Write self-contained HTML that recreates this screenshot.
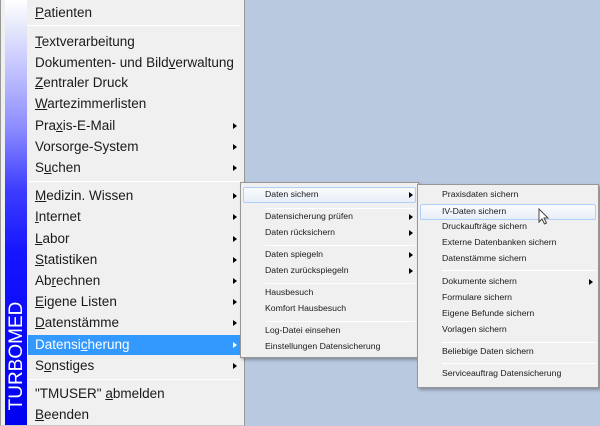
<!DOCTYPE html><html><head><meta charset="utf-8"><style>
*{margin:0;padding:0;box-sizing:border-box}
body{width:600px;height:425px;background:#b9c9e0;position:relative;overflow:hidden;font-family:"Liberation Sans",sans-serif;color:#1a1a1a}
.m{position:absolute;background:#f0f0f0;border:1px solid #979797}
.bar{position:absolute;left:4px;top:0;width:22px;height:425px;background:linear-gradient(#fff 0%,#dfe3fb 8%,#c8c8ff 15%,#8c8cff 30%,#3c3cff 45%,#1414ff 60%,#0000f0 100%)}
.t{position:absolute;white-space:nowrap}
.a{position:absolute;width:0;height:0;border-left:4px solid #000;border-top:3px solid transparent;border-bottom:3px solid transparent}
.s{position:absolute;height:1px;background:#d5d5d5;border-bottom:1px solid #fff}
.m1 .t{font-size:13.5px;left:34px}
.m2 .t,.m3 .t{font-size:8.7px}
u{text-decoration:underline}
</style></head><body>
<div class="m m1" style="left:0;top:-1px;width:245px;height:427px;border-color:#c8c8c8 #979797">
<div class="bar"></div>
<div style="position:absolute;left:27px;top:335px;width:213px;height:20px;background:#3399ff"></div>
<div class="t" style="top:5px"><u>P</u>atienten</div>
<div class="s" style="left:27px;top:25px;width:212px"></div>
<div class="t" style="top:34px"><u>T</u>extverarbeitung</div>
<div class="t" style="top:55px">Dokumenten- und Bild<u>v</u>erwaltung</div>
<div class="t" style="top:75px"><u>Z</u>entraler Druck</div>
<div class="t" style="top:96px"><u>W</u>artezimmerlisten</div>
<div class="t" style="top:118px">Pra<u>x</u>is-E-Mail</div><div class="a" style="left:232px;top:123px"></div>
<div class="t" style="top:139px">Vorsorge-System</div><div class="a" style="left:232px;top:144px"></div>
<div class="t" style="top:160px">S<u>u</u>chen</div><div class="a" style="left:232px;top:165px"></div>
<div class="s" style="left:27px;top:181px;width:212px"></div>
<div class="t" style="top:188px"><u>M</u>edizin. Wissen</div><div class="a" style="left:232px;top:193px"></div>
<div class="t" style="top:209px"><u>I</u>nternet</div><div class="a" style="left:232px;top:214px"></div>
<div class="t" style="top:231px"><u>L</u>abor</div><div class="a" style="left:232px;top:236px"></div>
<div class="t" style="top:252px"><u>S</u>tatistiken</div><div class="a" style="left:232px;top:257px"></div>
<div class="t" style="top:273px">Ab<u>r</u>echnen</div><div class="a" style="left:232px;top:278px"></div>
<div class="t" style="top:294px"><u>E</u>igene Listen</div><div class="a" style="left:232px;top:299px"></div>
<div class="t" style="top:315px"><u>D</u>atenstämme</div><div class="a" style="left:232px;top:320px"></div>
<div class="t" style="top:337px;color:#fff">Datensi<u>c</u>herung</div><div class="a" style="left:232px;top:342px;border-left-color:#fff"></div>
<div class="t" style="top:358px">S<u>o</u>nstiges</div><div class="a" style="left:232px;top:363px"></div>
<div class="s" style="left:27px;top:379px;width:212px"></div>
<div class="t" style="top:386px">"TMUSER" <u>a</u>bmelden</div>
<div class="t" style="top:407px"><u>B</u>eenden</div>
<div style="position:absolute;left:16px;top:356px;transform:translate(-50%,-50%) rotate(-90deg);color:#fff;font-size:19px;white-space:nowrap">TURBOMED</div>
</div>

<div class="m m2" style="left:240px;top:182px;width:179px;height:176px;box-shadow:2px 2px 3px rgba(0,0,0,.3)">
<div style="position:absolute;left:2px;top:4px;width:173px;height:16px;background:linear-gradient(#fafbfd,#e8eef8);border:1px solid #aecff7;border-radius:2px"></div>
<div class="t" style="left:24px;top:6px">Daten sichern</div><div class="a" style="left:168px;top:9px"></div>
<div class="s" style="left:24px;top:25px;width:150px"></div>
<div class="t" style="left:24px;top:28px">Datensicherung prüfen</div><div class="a" style="left:168px;top:31px"></div>
<div class="t" style="left:24px;top:44px">Daten rücksichern</div><div class="a" style="left:168px;top:47px"></div>
<div class="s" style="left:24px;top:62px;width:150px"></div>
<div class="t" style="left:24px;top:66px">Daten spiegeln</div><div class="a" style="left:168px;top:69px"></div>
<div class="t" style="left:24px;top:82px">Daten zurückspiegeln</div><div class="a" style="left:168px;top:85px"></div>
<div class="s" style="left:24px;top:100px;width:150px"></div>
<div class="t" style="left:24px;top:104px">Hausbesuch</div>
<div class="t" style="left:24px;top:120px">Komfort Hausbesuch</div>
<div class="s" style="left:24px;top:138px;width:150px"></div>
<div class="t" style="left:24px;top:142px">Log-Datei einsehen</div>
<div class="t" style="left:24px;top:158px">Einstellungen Datensicherung</div>
</div>

<div class="m m3" style="left:417px;top:184px;width:182px;height:204px;box-shadow:2px 2px 3px rgba(0,0,0,.3)">
<div style="position:absolute;left:2px;top:19px;width:176px;height:16px;background:linear-gradient(#fafbfd,#e8eef8);border:1px solid #aecff7;border-radius:2px"></div>
<div class="t" style="left:24px;top:4px">Praxisdaten sichern</div>
<div class="t" style="left:24px;top:21px">IV-Daten sichern</div>
<div class="t" style="left:24px;top:36px">Druckaufträge sichern</div>
<div class="t" style="left:24px;top:52px">Externe Datenbanken sichern</div>
<div class="t" style="left:24px;top:68px">Datenstämme sichern</div>
<div class="s" style="left:24px;top:85px;width:154px"></div>
<div class="t" style="left:24px;top:91px">Dokumente sichern</div><div class="a" style="left:171px;top:94px"></div>
<div class="t" style="left:24px;top:107px">Formulare sichern</div>
<div class="t" style="left:24px;top:123px">Eigene Befunde sichern</div>
<div class="t" style="left:24px;top:139px">Vorlagen sichern</div>
<div class="s" style="left:24px;top:157px;width:154px"></div>
<div class="t" style="left:24px;top:161px">Beliebige Daten sichern</div>
<div class="s" style="left:24px;top:178px;width:154px"></div>
<div class="t" style="left:24px;top:183px">Serviceauftrag Datensicherung</div>
</div>
<svg style="position:absolute;left:538px;top:208px" width="12" height="18" viewBox="0 0 12 18"><path d="M1 1 L1 14 L4 11 L6.5 16 L8.5 15 L6 10 L10 10 Z" fill="#fff" stroke="#444" stroke-width="1"/></svg>
</body></html>
